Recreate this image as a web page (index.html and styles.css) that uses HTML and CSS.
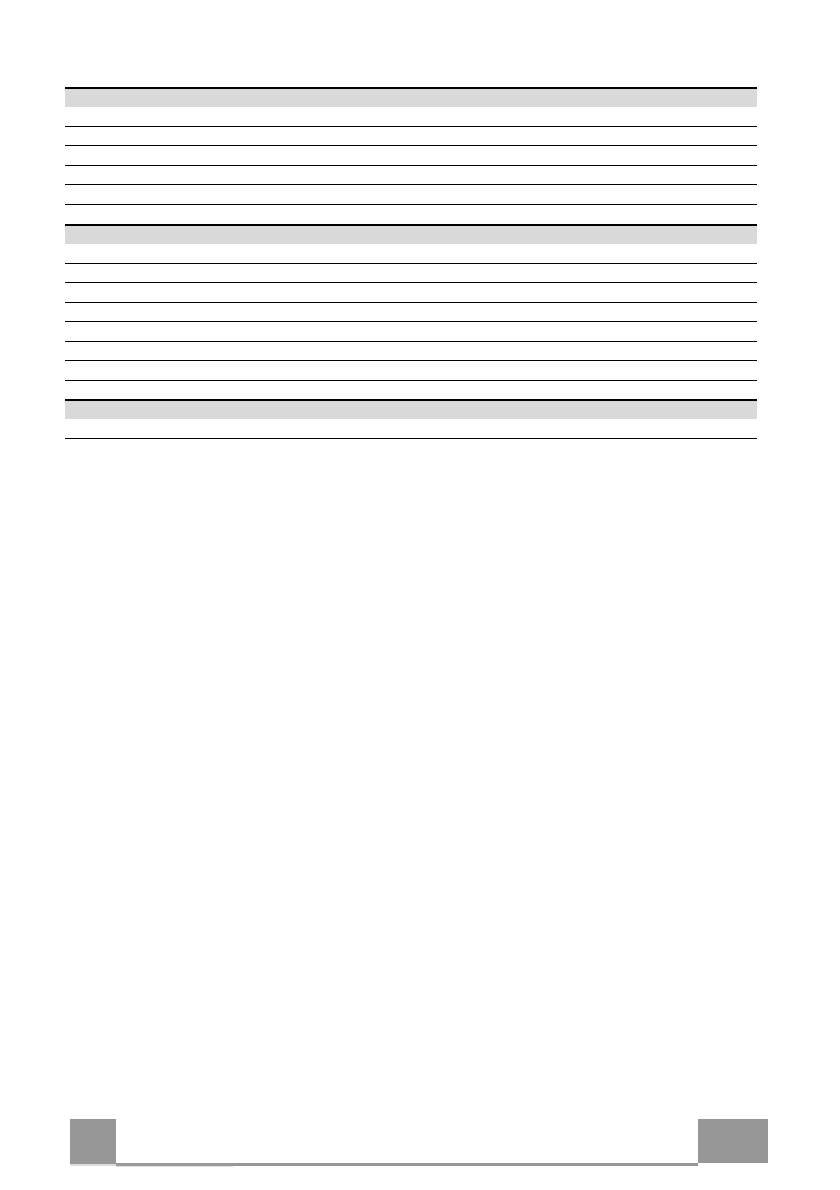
FILE: index.html
```html
<!DOCTYPE html>
<html lang="en">
<head>
<meta charset="utf-8">
<title>Table</title>
<link rel="stylesheet" href="styles.css">
</head>
<body>
<div class="page">
  <div class="sheet">
    <section class="group">
      <div class="head"></div>
      <div class="row"></div>
      <div class="row"></div>
      <div class="row"></div>
      <div class="row"></div>
      <div class="row"></div>
      <div class="row last"></div>
    </section>
    <section class="group">
      <div class="head"></div>
      <div class="row"></div>
      <div class="row"></div>
      <div class="row"></div>
      <div class="row"></div>
      <div class="row"></div>
      <div class="row"></div>
      <div class="row"></div>
      <div class="row last short"></div>
    </section>
    <section class="group">
      <div class="head"></div>
      <div class="row"></div>
    </section>
  </div>
  <footer class="footer">
    <div class="box box-left"></div>
    <div class="rule">
      <div class="rule-a"></div>
      <div class="rule-b"></div>
    </div>
    <div class="box box-right"></div>
  </footer>
</div>
</body>
</html>
```

FILE: styles.css
```css
html, body {
  margin: 0;
  padding: 0;
  background: #ffffff;
  font-family: "Liberation Sans", Arial, sans-serif;
}

.page {
  width: 840px;
  height: 1190px;
  box-sizing: border-box;
  padding-top: 87px;
  padding-bottom: 23px;
  display: flex;
  flex-direction: column;
}

.sheet {
  margin-left: 65px;
  width: 692px;
}

.group {
  border-top: 2px solid #000;
}

.head {
  height: 18px;
  background: #d9d9d9;
}

.row {
  height: 18.5px;
  border-bottom: 1px solid #000;
}

.row.last {
  border-bottom: 0;
  height: 19.5px;
}

.row.last.short {
  height: 18.5px;
}

.footer {
  margin-top: auto;
  margin-left: 70px;
  width: 698px;
  display: flex;
  align-items: flex-start;
}

.box {
  background: #979797;
  flex: none;
}

.box-left {
  width: 46px;
  height: 45px;
  border-bottom: 2px solid #dcdcdc;
}

.box-right {
  width: 70px;
  height: 44px;
}

.rule {
  flex: 1;
  display: flex;
  margin-top: 44px;
}

.rule-a {
  width: 117px;
  height: 3px;
  background: #9a9a9a;
  border-bottom: 1px solid #dcdcdc;
}

.rule-b {
  flex: 1;
  height: 2.5px;
  background: #979797;
}
```
